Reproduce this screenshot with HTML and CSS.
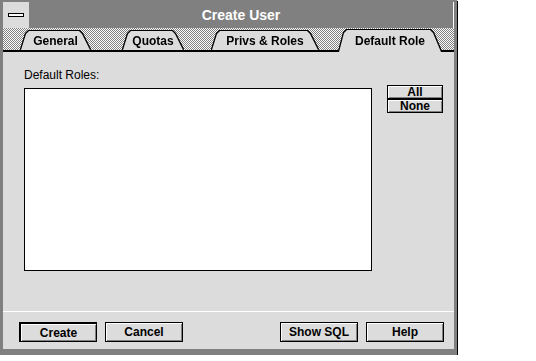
FILE: index.html
```html
<!DOCTYPE html>
<html lang="en">
<head>
    <meta charset="UTF-8">
    <title>Create User</title>
    <link rel="stylesheet" href="styles.css">
</head>
<body>
    <div class="window">
        <div class="titlebar">
            <div class="sysmenu"><span class="sysmenu-bar"></span></div>
            <div class="title">Create User</div>
        </div>

        <div class="tabs">
            <div class="tab tab-general"><div class="tab-face">General</div></div>
            <div class="tab tab-quotas"><div class="tab-face">Quotas</div></div>
            <div class="tab tab-privs"><div class="tab-face">Privs &amp; Roles</div></div>
            <div class="tab tab-default active"><div class="tab-face">Default Role</div></div>
        </div>

        <div class="panel">
            <div class="content">
                <div class="field-label">Default Roles:</div>
                <div class="roles-row">
                    <div class="listbox"></div>
                    <div class="side-buttons">
                        <button class="btn btn-small">All</button>
                        <button class="btn btn-small">None</button>
                    </div>
                </div>
            </div>

            <div class="footer">
                <div class="btn-group">
                    <button class="btn btn-default">Create</button>
                    <button class="btn">Cancel</button>
                </div>
                <div class="btn-group">
                    <button class="btn">Show SQL</button>
                    <button class="btn">Help</button>
                </div>
            </div>
        </div>
    </div>
</body>
</html>
```

FILE: styles.css
```css
:root {
    --face: #dcdcdc;
    --frame: #808080;
    --dark: #000000;
    --light: #ffffff;
}

body {
    margin: 0;
    background-color: #ffffff;
    font-family: "Liberation Sans", Arial, sans-serif;
    color: #000;
}

.window {
    width: 451px;
    height: 347px;
    border-style: solid;
    border-color: var(--frame);
    border-width: 2px 3px 6px 3px;
    box-shadow: 1px 1px 0 var(--dark);
    display: flex;
    flex-direction: column;
}

/* title bar */
.titlebar {
    height: 26px;
    display: flex;
    background-color: var(--frame);
    border-right: 1px solid var(--light);
}

.sysmenu {
    width: 26px;
    height: 26px;
    background-color: var(--face);
    display: flex;
    align-items: center;
    justify-content: center;
}

.sysmenu-bar {
    width: 14px;
    height: 2px;
    background-color: var(--light);
    border: 1px solid var(--dark);
}

.title {
    flex: 1;
    text-align: center;
    line-height: 26px;
    font-size: 14px;
    font-weight: bold;
    color: var(--light);
}

/* tab strip */
.tabs {
    height: 24px;
    display: flex;
    align-items: flex-end;
    background: repeating-conic-gradient(#808080 0 25%, #ffffff 0 50%) 0 0 / 2px 2px;
    box-shadow: inset 0 -2px 0 var(--dark);
}

.tab {
    margin-bottom: 2px;
    filter: drop-shadow(-1px 0 0 #000) drop-shadow(1px 0 0 #000) drop-shadow(0 -1px 0 #000);
}

.tab-face {
    height: 19px;
    box-sizing: border-box;
    padding-top: 3px;
    line-height: 14px;
    text-align: center;
    font-size: 12px;
    font-weight: bold;
    background-color: var(--face);
    clip-path: polygon(0 100%, 5px 3px, 8px 0, calc(100% - 11px) 0, calc(100% - 8px) 3px, 100% 100%);
}

.tab.active {
    margin-bottom: 0;
}

.tab.active .tab-face {
    height: 22px;
    padding-top: 4px;
}

.tab-general { margin-left: 18px; width: 69px; }
.tab-quotas { margin-left: 33px; width: 60px; }
.tab-privs { margin-left: 29px; width: 106px; }
.tab-default { margin-left: 21px; width: 102px; }

/* panel */
.panel {
    flex: 1;
    display: flex;
    flex-direction: column;
    background-color: var(--face);
}

.content {
    height: 260px;
    box-sizing: border-box;
    padding: 16px 0 0 21px;
    border-bottom: 1px solid var(--light);
}

.field-label {
    font-size: 12px;
    line-height: 14px;
}

.roles-row {
    display: flex;
    align-items: flex-start;
    margin-top: 3px;
}

.listbox {
    width: 346px;
    height: 181px;
    margin-top: 3px;
    background-color: var(--light);
    border: 1px solid var(--dark);
}

.side-buttons {
    display: flex;
    flex-direction: column;
    margin-left: 15px;
}

.btn {
    width: 78px;
    height: 20px;
    padding: 0;
    font-family: inherit;
    font-size: 12px;
    font-weight: bold;
    color: #000;
    background-color: var(--face);
    border: 1px solid var(--dark);
    box-shadow: inset 1px 1px 0 var(--light), inset -1px -1px 0 var(--frame);
}

.btn-small {
    width: 56px;
    height: 14px;
    line-height: 12px;
}

.btn-default {
    border-width: 2px 1px 1px 2px;
}

.footer {
    display: flex;
    justify-content: space-between;
    padding: 10px 10px 0 16px;
}

.btn-group {
    display: flex;
    gap: 8px;
}
```
